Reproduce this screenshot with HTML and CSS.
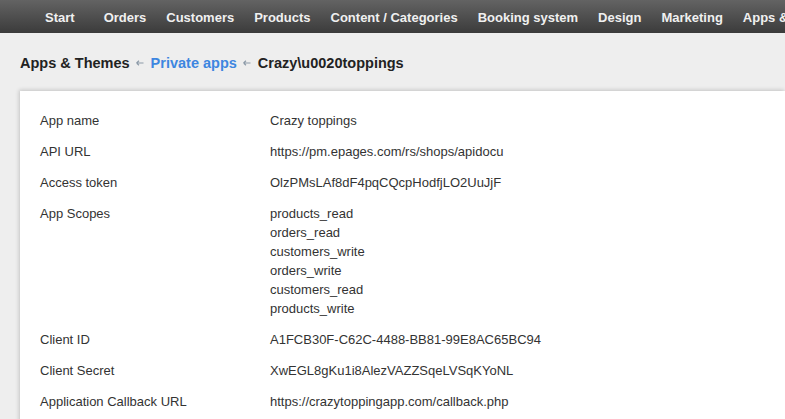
FILE: index.html
```html
<!DOCTYPE html>
<html>
<head>
<meta charset="utf-8">
<link rel="stylesheet" href="styles.css">
</head>
<body>
<nav class="topnav">
  <a class="nav-item first">Start</a>
  <a class="nav-item">Orders</a>
  <a class="nav-item">Customers</a>
  <a class="nav-item">Products</a>
  <a class="nav-item">Content / Categories</a>
  <a class="nav-item">Booking system</a>
  <a class="nav-item">Design</a>
  <a class="nav-item">Marketing</a>
  <a class="nav-item">Apps &amp; Themes</a>
</nav>
<div class="breadcrumb">
  <span class="crumb">Apps &amp; Themes</span>
  <svg class="sep" width="8" height="6" viewBox="0 0 8 6"><path d="M0.5 3 L3 0.8 M0.5 3 L3 5.2 M0.5 3 H7.5" stroke="#8c9aa8" stroke-width="1.2" fill="none"/></svg>
  <span class="crumb link">Private apps</span>
  <svg class="sep" width="8" height="6" viewBox="0 0 8 6"><path d="M0.5 3 L3 0.8 M0.5 3 L3 5.2 M0.5 3 H7.5" stroke="#8c9aa8" stroke-width="1.2" fill="none"/></svg>
  <span class="crumb">Crazy\u0020toppings</span>
</div>
<main class="card">
  <dl class="details">
    <dt>App name</dt><dd>Crazy toppings</dd>
    <dt>API URL</dt><dd>https://pm.epages.com/rs/shops/apidocu</dd>
    <dt>Access token</dt><dd>OlzPMsLAf8dF4pqCQcpHodfjLO2UuJjF</dd>
    <dt>App Scopes</dt><dd>products_read<br>orders_read<br>customers_write<br>orders_write<br>customers_read<br>products_write</dd>
    <dt>Client ID</dt><dd>A1FCB30F-C62C-4488-BB81-99E8AC65BC94</dd>
    <dt>Client Secret</dt><dd>XwEGL8gKu1i8AlezVAZZSqeLVSqKYoNL</dd>
    <dt>Application Callback URL</dt><dd>https://crazytoppingapp.com/callback.php</dd>
  </dl>
</main>
</body>
</html>
```
FILE: styles.css
```css
html, body {
  margin: 0;
  padding: 0;
}
body {
  font-family: "Liberation Sans", Arial, sans-serif;
  background: #eeeeee;
  overflow: hidden;
  width: 785px;
  height: 419px;
}
.topnav {
  height: 33px;
  box-sizing: border-box;
  padding-top: 2px;
  background: linear-gradient(#636363, #3b3b3b);
  display: flex;
  align-items: center;
  padding-left: 45px;
  gap: 20px;
  white-space: nowrap;
  overflow: hidden;
}
.nav-item {
  color: #f0f0f0;
  font-weight: bold;
  font-size: 13px;
  text-decoration: none;
}
.nav-item.first {
  margin-right: 9px;
}
.breadcrumb {
  display: flex;
  align-items: center;
  gap: 6.5px;
  padding: 22px 0 0 20px;
  height: 37px;
  box-sizing: border-box;
  font-size: 14.5px;
  font-weight: bold;
  color: #222;
}
.breadcrumb .link {
  color: #3d86e0;
}
.sep {
  margin-top: 1px;
}
.card {
  margin-left: 20px;
  margin-top: 21px;
  background: #fff;
  box-shadow: -1px -1px 4px rgba(0,0,0,0.18);
  padding: 20px 0 0 20px;
  height: 320px;
}
.details {
  margin: 0;
  display: grid;
  grid-template-columns: 230px 1fr;
  row-gap: 12px;
  font-size: 13px;
  line-height: 19px;
  color: #333;
}
.details dt, .details dd {
  margin: 0;
}
```
